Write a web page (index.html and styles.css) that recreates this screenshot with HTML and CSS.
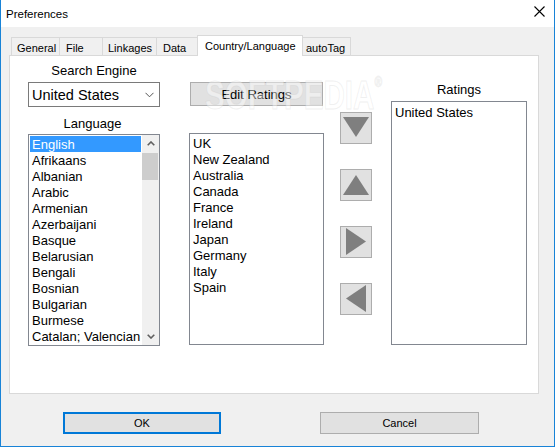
FILE: index.html
```html
<!DOCTYPE html>
<html>
<head>
<meta charset="utf-8">
<title>Preferences</title>
<link rel="stylesheet" href="styles.css">
</head>
<body>
<div class="window">
  <div class="titlebar">
    <span class="title">Preferences</span>
    <svg class="close" width="11" height="11" viewBox="0 0 11 11"><path d="M0.5 0.5 L10.5 10.5 M10.5 0.5 L0.5 10.5" stroke="#000" stroke-width="1.1" fill="none"/></svg>
  </div>
  <div class="client">
    <div class="tabs">
      <div class="tab t-general">General</div>
      <div class="tab t-file">File</div>
      <div class="tab t-link">Linkages</div>
      <div class="tab t-data">Data</div>
      <div class="tab t-country selected">Country/Language</div>
      <div class="tab t-auto">autoTag</div>
    </div>
    <div class="panel">
      <div class="col col-left">
        <div class="label">Search Engine</div>
        <div class="select">
          <span>United States</span>
          <svg class="chev" width="9" height="6" viewBox="0 0 9 6"><path d="M0.5 0.8 L4.5 4.8 L8.5 0.8" stroke="#555" stroke-width="1" fill="none"/></svg>
        </div>
        <div class="label label-lang">Language</div>
        <div class="listbox lang">
          <div class="items">
            <div class="item sel">English</div>
            <div class="item">Afrikaans</div>
            <div class="item">Albanian</div>
            <div class="item">Arabic</div>
            <div class="item">Armenian</div>
            <div class="item">Azerbaijani</div>
            <div class="item">Basque</div>
            <div class="item">Belarusian</div>
            <div class="item">Bengali</div>
            <div class="item">Bosnian</div>
            <div class="item">Bulgarian</div>
            <div class="item">Burmese</div>
            <div class="item">Catalan; Valencian</div>
          </div>
          <div class="scrollbar">
            <div class="sb-btn">
              <svg width="8" height="5" viewBox="0 0 8 5"><path d="M0.7 4.3 L4 1 L7.3 4.3" stroke="#606060" stroke-width="1.6" fill="none"/></svg>
            </div>
            <div class="sb-track"><div class="sb-thumb"></div></div>
            <div class="sb-btn">
              <svg width="8" height="5" viewBox="0 0 8 5"><path d="M0.7 0.7 L4 4 L7.3 0.7" stroke="#606060" stroke-width="1.6" fill="none"/></svg>
            </div>
          </div>
        </div>
      </div>
      <div class="col col-mid">
        <div class="btn edit">Edit Ratings</div>
        <div class="listbox country">
          <div class="items plain">
            <div class="item">UK</div>
            <div class="item">New Zealand</div>
            <div class="item">Australia</div>
            <div class="item">Canada</div>
            <div class="item">France</div>
            <div class="item">Ireland</div>
            <div class="item">Japan</div>
            <div class="item">Germany</div>
            <div class="item">Italy</div>
            <div class="item">Spain</div>
          </div>
        </div>
      </div>
      <div class="col col-arrows">
        <div class="abtn"><svg width="30" height="30" viewBox="0 0 30 30"><polygon points="2,4 28,4 15,24" fill="#7f7f7f"/></svg></div>
        <div class="abtn"><svg width="30" height="30" viewBox="0 0 30 30"><polygon points="2,25 28,25 15,5" fill="#7f7f7f"/></svg></div>
        <div class="abtn"><svg width="30" height="30" viewBox="0 0 30 30"><polygon points="5,1 5,28 25,14.5" fill="#7f7f7f"/></svg></div>
        <div class="abtn"><svg width="30" height="30" viewBox="0 0 30 30"><polygon points="25,1 25,28 5,14.5" fill="#7f7f7f"/></svg></div>
      </div>
      <div class="col col-right">
        <div class="label">Ratings</div>
        <div class="listbox ratings">
          <div class="items plain">
            <div class="item">United States</div>
          </div>
        </div>
      </div>
      <div class="watermark">SOFTPEDIA<sup>®</sup></div>
    </div>
    <div class="footer">
      <div class="btn dlg ok">OK</div>
      <div class="btn dlg cancel">Cancel</div>
    </div>
  </div>
</div>
</body>
</html>
```
FILE: styles.css
```css
* { box-sizing: border-box; }
html, body { margin: 0; padding: 0; background: #f0f0f0; }
body { font-family: "Liberation Sans", Arial, sans-serif; color: #000; }

.window {
  width: 555px;
  height: 447px;
  border: 1px solid #1883d7;
  border-top: none;
  background: #f0f0f0;
  display: flex;
  flex-direction: column;
  overflow: hidden;
}

.titlebar {
  height: 27px;
  background: #fff;
  display: flex;
  align-items: center;
  justify-content: space-between;
  padding: 0 9px 0 5px;
  flex: none;
}
.title { font-size: 11.5px; margin-top: 1px; }
.close { margin-top: -4px; }

.client { flex: 1; display: flex; flex-direction: column; }

.tabs {
  display: flex;
  align-items: flex-end;
  height: 28px;
  padding-left: 10px;
  flex: none;
}
.tab {
  height: 18px;
  border: 1px solid #d9d9d9;
  border-bottom: none;
  margin-left: -1px;
  background: #f0f0f0;
  font-size: 11px;
  display: flex;
  align-items: center;
  padding-top: 2px;
}
.tabs .tab:first-child { margin-left: 0; }
.t-general { width: 49px; padding-left: 5px; }
.t-file { width: 44px; padding-left: 6px; }
.t-link { width: 55px; padding-left: 5px; }
.t-data { width: 42px; padding-left: 6px; }
.t-country { width: 106px; padding-left: 7px; }
.t-auto { width: 49px; padding-left: 3px; }
.tab.selected {
  height: 21px;
  margin-bottom: -1px;
  background: #fff;
  position: relative;
  z-index: 2;
  padding-top: 1px;
  padding-bottom: 1px;
}

.panel {
  margin-left: 8px;
  width: 530px;
  height: 339px;
  background: #fff;
  border: 1px solid #d9d9d9;
  display: flex;
  align-items: flex-start;
  padding-left: 18px;
  position: relative;
  flex: none;
}

.col { display: flex; flex-direction: column; }
.label { font-size: 13px; line-height: 18px; height: 16px; text-align: center; }

.col-left { width: 132px; padding-top: 6px; }
.select {
  margin-top: 4px;
  height: 25px;
  border: 1px solid #7a7a7a;
  background: #fff;
  display: flex;
  align-items: center;
  justify-content: space-between;
  padding: 1px 5px 0 3px;
  font-size: 14.5px;
}
.chev { margin-top: 0; }
.label-lang { margin-top: 8px; padding-right: 3px; }

.listbox {
  border: 1px solid #828790;
  background: #fff;
  display: flex;
  font-size: 13px;
}
.lang { margin-top: 3px; height: 212px; }
.items { flex: 1; padding: 1px; overflow: hidden; }
.item { height: 16px; line-height: 18px; padding-left: 2px; white-space: nowrap; }
.item.sel { background: #3399ff; color: #fff; }
.items.plain { padding: 1px 0 0 3px; }
.items.plain .item { padding-left: 0; }
.ratings .items.plain { padding-top: 2px; }

.scrollbar {
  width: 17px;
  background: #f0f0f0;
  display: flex;
  flex-direction: column;
}
.sb-btn {
  height: 17px;
  display: flex;
  align-items: center;
  justify-content: center;
  flex: none;
}
.sb-track { flex: 1; padding: 1px 1px 0 0; }
.sb-thumb { height: 27px; background: #cdcdcd; margin-left: 0; }

.col-mid { width: 135px; margin-left: 29px; padding-top: 26px; }
.btn {
  background: #e1e1e1;
  border: 1px solid #adadad;
  display: flex;
  align-items: center;
  justify-content: center;
}
.edit { width: 133px; height: 24px; margin-left: 1px; font-size: 13px; }
.country { margin-top: 27px; height: 212px; }

.col-arrows { width: 32px; margin-left: 16px; padding-top: 56px; gap: 25px; }
.abtn {
  width: 32px;
  height: 32px;
  background: #e1e1e1;
  border: 1px solid #adadad;
}
.abtn svg { display: block; }

.col-right { width: 136px; margin-left: 19px; padding-top: 25px; }
.ratings { margin-top: 4px; height: 244px; }

.watermark {
  position: absolute;
  left: 195px;
  top: 19px;
  font-size: 40px;
  line-height: 40px;
  font-weight: bold;
  color: rgba(255, 255, 255, 0.45);
  -webkit-text-stroke: 1px rgba(190, 190, 190, 0.22);
  transform: scaleX(0.74);
  transform-origin: left top;
  pointer-events: none;
  white-space: nowrap;
  z-index: 3;
}
.watermark sup { font-size: 14px; vertical-align: top; line-height: 14px; }

.footer {
  display: flex;
  padding-left: 62px;
  margin-top: 18px;
}
.dlg { height: 22px; font-size: 11px; }
.ok { width: 158px; border: 2px solid #0078d7; }
.cancel { width: 159px; margin-left: 99px; }
```
